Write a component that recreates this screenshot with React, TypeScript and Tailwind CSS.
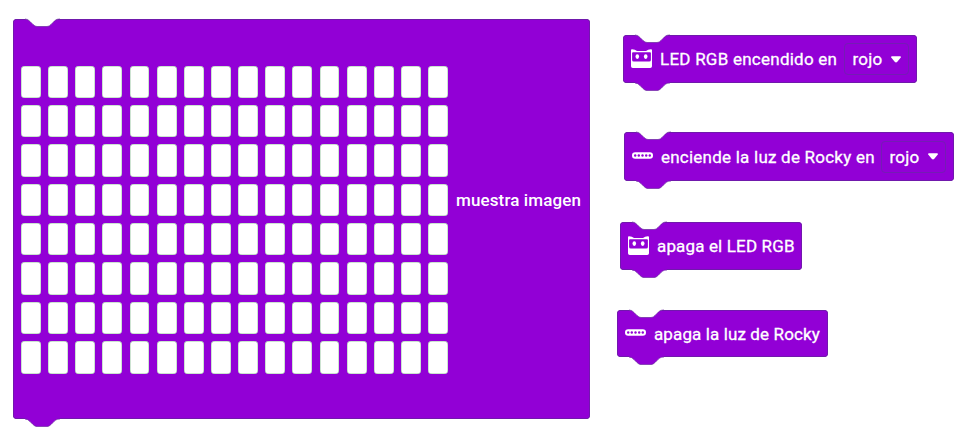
import type { ReactNode } from 'react';

const CELLS = Array.from({ length: 128 }, (_, i) => i);

function Notch() {
  return (
    <svg className="absolute -top-px left-3 h-[9px] w-[35px]" viewBox="0 0 35 9">
      <path d="M0 0H35V1C31 1 30 2.500 28 4.500L26 6.500Q24.500 8.500 22 8.500H12Q10 8.500 8 6.500L5 3.500Q3 1 0 1Z" fill="#fff" />
      <path d="M0 1Q3 1 5 3.500L8 6.500Q10 8.500 12 8.500H22Q24.500 8.500 26 6.500L28 4.500C30 2.500 31 1 35 1" fill="none" stroke="#65229e" strokeWidth=".7" />
    </svg>
  );
}

function Tab() {
  return (
    <svg className="absolute -bottom-2 left-3 h-[9px] w-[35px]" viewBox="0 0 35 9">
      <path d="M0 0H35V1C31 1 30 2.500 28 4.500L26 6.500Q24 8.600 22 8.600H12Q10 8.600 8 6.500L5 3.500Q3 1 0 1Z" fill="#9200d6" />
      <path d="M0 1Q3 1 5 3.500L8 6.500Q10 8.600 12 8.600H22Q24 8.600 26 6.500L28 4.500C30 2.500 31 1 35 1" fill="none" stroke="#65229e" strokeWidth=".7" />
    </svg>
  );
}

function Block({ className, children }: { className: string; children: ReactNode }) {
  return (
    <div className={`absolute flex items-center rounded-[4px] bg-[#9200d6] shadow-[inset_0_0_0_0.7px_#65229e] ${className}`}>
      <Notch />
      {children}
      <Tab />
    </div>
  );
}

function Panda() {
  return (
    <svg className="h-5 w-[21px] shrink-0" viewBox="0 0 21 20">
      <path d="M0 1.200Q0 0 1.200 .2Q4 .5 6 2H15Q17 .5 19.800 .2Q21 0 21 1.200V17.200Q21 19 19.200 19H1.800Q0 19 0 17.200Z" fill="#fff" />
      <path d="M2 3.200H19Q19.900 3.200 19.900 4.200V11Q19.900 12.500 18.200 12.500H2.800Q1.100 12.500 1.100 11V4.200Q1.100 3.200 2 3.200Z" fill="#9200d6" />
      <ellipse cx="6.300" cy="7.600" rx="1.800" ry="2.400" fill="#fff" />
      <ellipse cx="14.700" cy="7.600" rx="1.800" ry="2.400" fill="#fff" />
    </svg>
  );
}

function Strip() {
  return (
    <svg className="mb-[2px] h-[7px] w-[21px] shrink-0" viewBox="0 0 21 7">
      <rect y=".3" width="21" height="6.400" rx="3.200" fill="#fff" />
      {[3.2, 6.8, 10.5, 14.2, 17.8].map((x) => (
        <circle key={x} cx={x} cy="3.500" r="1.200" fill="#9200d6" />
      ))}
    </svg>
  );
}

function Dropdown() {
  return (
    <div className="flex h-8 w-[65px] shrink-0 items-center rounded-[4px] border border-[#751cb5] pl-[7.500px]">
      <span className="w-[29px] tracking-[0.2px] [-webkit-text-stroke:0.3px_white]">rojo</span>
      <svg className="ml-[9px] h-[7px] w-[10px]" viewBox="0 0 10 7">
        <path d="M1 .2H9Q10.500 .5 9.600 1.800L6.300 5.800Q5 7 3.700 5.800L.4 1.800Q-.5 .5 1 .2Z" fill="#fff" />
      </svg>
    </div>
  );
}

export default function App() {
  return (
    <main className="relative h-[430px] w-[964px] overflow-hidden bg-white font-[Roboto,sans-serif] text-[17px] leading-5 font-normal whitespace-nowrap text-white">
      <Block className="top-[19px] left-[13px] h-[400px] w-[577px] pl-2">
        <div className="mt-px grid h-[308px] w-[427px] shrink-0 grid-cols-16 grid-rows-8 gap-x-[7.200px] gap-y-[7.200px]">
          {CELLS.map((i) => (
            <span key={i} className="rounded-[4px] bg-white shadow-[inset_0_0_0_0.5px_#9bc6a4]" />
          ))}
        </div>
        <span className="mt-[-38px] ml-2 font-medium tracking-[0.12px]">muestra imagen</span>
      </Block>
      <Block className="top-[35px] left-[623px] h-12 w-[294px] pl-2">
        <Panda />
        <span className="ml-2 w-[184px] tracking-[0.24px] [-webkit-text-stroke:0.3px_white]">LED RGB encendido en</span>
        <Dropdown />
      </Block>
      <Block className="top-[132px] left-[624px] h-[49px] w-[330px] pl-2">
        <Strip />
        <span className="ml-2 w-[220px] tracking-[0.23px] [-webkit-text-stroke:0.3px_white]">enciende la luz de Rocky en</span>
        <Dropdown />
      </Block>
      <Block className="top-[222px] left-[620px] h-12 w-[182px] pl-2">
        <Panda />
        <span className="ml-2 tracking-[0.15px] [-webkit-text-stroke:0.3px_white]">apaga el LED RGB</span>
      </Block>
      <Block className="top-[310px] left-[617px] h-[47px] w-[211px] pl-2">
        <Strip />
        <span className="mt-px ml-2 tracking-[0.12px] [-webkit-text-stroke:0.3px_white]">apaga la luz de Rocky</span>
      </Block>
    </main>
  );
}
